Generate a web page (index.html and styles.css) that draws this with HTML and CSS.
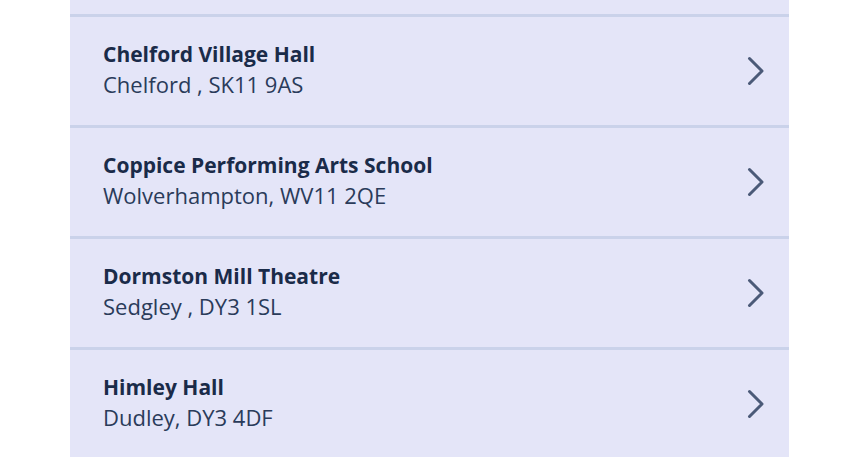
FILE: index.html
```html
<!DOCTYPE html>
<html>
<head>
<meta charset="utf-8">
<link rel="stylesheet" href="styles.css">
</head>
<body>
<div class="list">
  <div class="stub"></div>
  <a class="row" href="#">
    <div class="info">
      <div class="name">Chelford Village Hall</div>
      <div class="addr">Chelford , SK11 9AS</div>
    </div>
    <svg class="chev" width="18" height="30" viewBox="0 0 18 30"><path d="M2.5 2.5 L15 15 L2.5 27.5" fill="none" stroke="#4b5a78" stroke-width="3" stroke-linecap="round" stroke-linejoin="round"/></svg>
  </a>
  <a class="row" href="#">
    <div class="info">
      <div class="name">Coppice Performing Arts School</div>
      <div class="addr">Wolverhampton, WV11 2QE</div>
    </div>
    <svg class="chev" width="18" height="30" viewBox="0 0 18 30"><path d="M2.5 2.5 L15 15 L2.5 27.5" fill="none" stroke="#4b5a78" stroke-width="3" stroke-linecap="round" stroke-linejoin="round"/></svg>
  </a>
  <a class="row" href="#">
    <div class="info">
      <div class="name">Dormston Mill Theatre</div>
      <div class="addr">Sedgley , DY3 1SL</div>
    </div>
    <svg class="chev" width="18" height="30" viewBox="0 0 18 30"><path d="M2.5 2.5 L15 15 L2.5 27.5" fill="none" stroke="#4b5a78" stroke-width="3" stroke-linecap="round" stroke-linejoin="round"/></svg>
  </a>
  <a class="row" href="#">
    <div class="info">
      <div class="name">Himley Hall</div>
      <div class="addr">Dudley, DY3 4DF</div>
    </div>
    <svg class="chev" width="18" height="30" viewBox="0 0 18 30"><path d="M2.5 2.5 L15 15 L2.5 27.5" fill="none" stroke="#4b5a78" stroke-width="3" stroke-linecap="round" stroke-linejoin="round"/></svg>
  </a>
</div>
</body>
</html>
```
FILE: styles.css
```css
html, body {
  margin: 0;
  padding: 0;
  background: #ffffff;
  height: 457px;
  overflow: hidden;
}
.list {
  margin-left: 70px;
  width: 719px;
  background: #e4e5f8;
  font-family: "Open Sans", Lato, sans-serif;
}
.stub {
  height: 14px;
}
.row {
  display: flex;
  align-items: center;
  justify-content: space-between;
  border-top: 3px solid #cad2ea;
  padding: 22px 24px 26px 33px;
  text-decoration: none;
}
.info {
  display: flex;
  flex-direction: column;
}
.name {
  font-size: 21px;
  line-height: 30px;
  font-weight: 700;
  color: #1a2b49;
}
.addr {
  font-size: 22px;
  line-height: 30px;
  font-weight: 400;
  color: #2a3b5a;
}
.chev {
  display: block;
  margin-top: 3px;
}
```
